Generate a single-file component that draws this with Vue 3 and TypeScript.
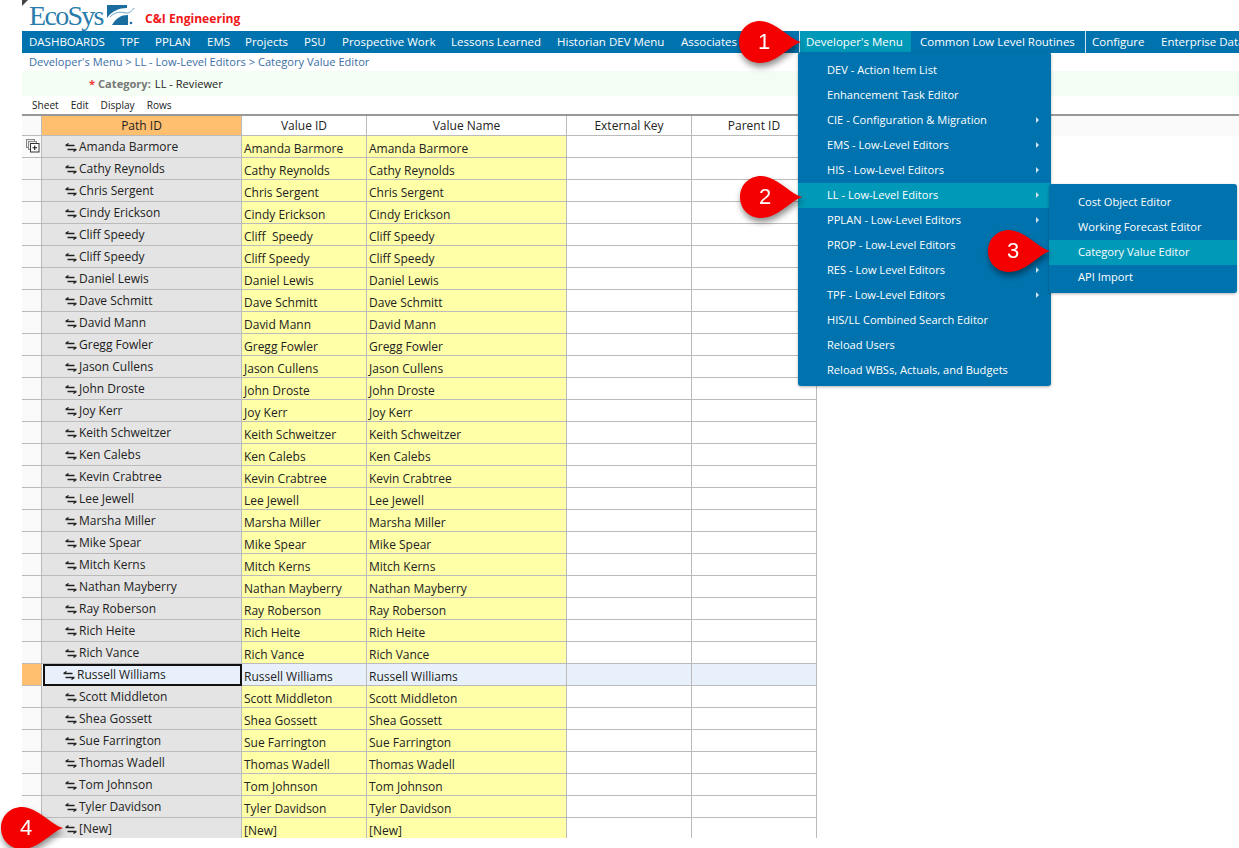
<script setup lang="ts">
const navItems = [
  { label: 'DASHBOARDS', w: 91 },
  { label: 'TPF', w: 35 },
  { label: 'PPLAN', w: 52 },
  { label: 'EMS', w: 38 },
  { label: 'Projects', w: 59 },
  { label: 'PSU', w: 38 },
  { label: 'Prospective Work', w: 109 },
  { label: 'Lessons Learned', w: 106 },
  { label: 'Historian DEV Menu', w: 124 },
  { label: 'Associates', w: 125 },
  { label: "Developer's Menu", w: 112, active: true, sep: true },
  { label: 'Common Low Level Routines', w: 174, wide: true },
  { label: 'Configure', w: 69, sep: true },
  { label: 'Enterprise Data', w: 100 }
]
const menu = [
  { label: 'DEV - Action Item List' },
  { label: 'Enhancement Task Editor' },
  { label: 'CIE - Configuration & Migration', sub: true },
  { label: 'EMS - Low-Level Editors', sub: true },
  { label: 'HIS - Low-Level Editors', sub: true },
  { label: 'LL - Low-Level Editors', sub: true, active: true },
  { label: 'PPLAN - Low-Level Editors', sub: true },
  { label: 'PROP - Low-Level Editors' },
  { label: 'RES - Low Level Editors', sub: true },
  { label: 'TPF - Low-Level Editors', sub: true },
  { label: 'HIS/LL Combined Search Editor' },
  { label: 'Reload Users' },
  { label: 'Reload WBSs, Actuals, and Budgets' }
]
const submenu = [
  { label: 'Cost Object Editor' },
  { label: 'Working Forecast Editor' },
  { label: 'Category Value Editor', active: true },
  { label: 'API Import' }
]
const names = [
  'Amanda Barmore', 'Cathy Reynolds', 'Chris Sergent', 'Cindy Erickson', 'Cliff Speedy', 'Cliff Speedy',
  'Daniel Lewis', 'Dave Schmitt', 'David Mann', 'Gregg Fowler', 'Jason Cullens', 'John Droste', 'Joy Kerr',
  'Keith Schweitzer', 'Ken Calebs', 'Kevin Crabtree', 'Lee Jewell', 'Marsha Miller', 'Mike Spear',
  'Mitch Kerns', 'Nathan Mayberry', 'Ray Roberson', 'Rich Heite', 'Rich Vance', 'Russell Williams',
  'Scott Middleton', 'Shea Gossett', 'Sue Farrington', 'Thomas Wadell', 'Tom Johnson', 'Tyler Davidson', '[New]'
]
const rows = names.map((name, i) => ({
  path: name,
  id: i === 4 ? 'Cliff  Speedy' : name,
  name,
  selected: name === 'Russell Williams'
}))
const callouts = [
  { n: 1, cls: 'c1' },
  { n: 2, cls: 'c2' },
  { n: 3, cls: 'c3' },
  { n: 4, cls: 'c4' }
]
</script>

<template>
  <div class="page">
    <header class="brand">
      <span class="corner"></span>
      <span class="logo-text">EcoSys</span>
      <svg class="logo-mark" width="28" height="21" viewBox="0 0 28 21">
        <path d="M0 0H20V3C12 3 5 6 0 13Z" fill="#1b6d9f" />
        <path d="M5 20C9 13 14 10 21 10V20Z" fill="#1b6d9f" />
        <path d="M3 12C9 6 14 7 19 8C22 8.500 25 6 27 3" fill="none" stroke="#6aa2c2" stroke-width="1" />
        <circle cx="24" cy="18" r="1.300" fill="#1b6d9f" />
      </svg>
      <span class="org">C&amp;I Engineering</span>
    </header>

    <nav class="nav">
      <span
        v-for="item in navItems"
        :key="item.label"
        class="nav-item"
        :class="{ active: item.active, sep: item.sep, wide: item.wide }"
        :style="{ width: item.w + 'px' }"
      >{{ item.label }}</span>
    </nav>

    <div class="crumbs">Developer's Menu &gt; LL - Low-Level Editors &gt; Category Value Editor</div>

    <div class="filter">
      <span class="req">*</span>
      <span class="filter-label">Category:</span>
      <span class="filter-value">LL - Reviewer</span>
    </div>

    <div class="toolbar">
      <span>Sheet</span>
      <span>Edit</span>
      <span>Display</span>
      <span>Rows</span>
    </div>

    <div class="sheet">
      <div class="row head">
        <div class="cell sel"></div>
        <div class="cell path-h">Path ID</div>
        <div class="cell">Value ID</div>
        <div class="cell">Value Name</div>
        <div class="cell">External Key</div>
        <div class="cell">Parent ID</div>
      </div>
      <div v-for="(r, i) in rows" :key="i" class="row" :class="{ selected: r.selected }">
        <div class="cell sel">
          <svg v-if="i === 0" width="14" height="14" viewBox="0 0 14 14" class="expand">
            <rect x="0.500" y="0.500" width="8" height="8" fill="#eee" stroke="#888" />
            <rect x="2.500" y="2.500" width="8" height="8" fill="#eee" stroke="#888" />
            <rect x="4.500" y="4.500" width="8.500" height="8.500" fill="#fff" stroke="#333" />
            <path d="M8.750 6.500V11M6.500 8.750H11" stroke="#111" />
          </svg>
        </div>
        <div class="cell path">
          <svg width="12" height="9" viewBox="0 0 12 9" class="swap">
            <path d="M0.500 2.500H9.500M0.500 2.500L3.500 0.500M11.500 6.500H2.500M11.500 6.500L8.500 8.500" stroke="#222" stroke-width="1.300" fill="none" />
          </svg>
          <span>{{ r.path }}</span>
        </div>
        <div class="cell val">{{ r.id }}</div>
        <div class="cell val">{{ r.name }}</div>
        <div class="cell"></div>
        <div class="cell"></div>
      </div>
    </div>

    <ul class="menu main-menu">
      <li v-for="m in menu" :key="m.label" :class="{ active: m.active }">
        {{ m.label }}
        <i v-if="m.sub" class="arrow"></i>
      </li>
    </ul>
    <ul class="menu sub-menu">
      <li v-for="m in submenu" :key="m.label" :class="{ active: m.active }">{{ m.label }}</li>
    </ul>

    <div v-for="c in callouts" :key="c.n" class="callout" :class="c.cls">
      <svg width="62" height="42" viewBox="0 0 62 42">
        <path d="M62 21C50 18 38 1 21 0C9 0 0 9 0 21C0 33 9 42 21 42C38 42 50 25 62 21Z" fill="#f50000" />
      </svg>
      <span>{{ c.n }}</span>
    </div>
  </div>
</template>

<style scoped>
.page {
  position: relative;
  width: 1239px;
  height: 848px;
  overflow: hidden;
  background: #fff;
  font-family: "Open Sans", "Noto Sans", sans-serif;
  font-size: 11.100px;
  color: #222;
}
.brand {
  position: relative;
  height: 31px;
  padding-left: 29px;
  display: flex;
  align-items: flex-start;
}
.corner {
  position: absolute;
  left: 22px;
  top: 0;
  width: 0;
  height: 0;
  border-top: 6px solid #444;
  border-right: 6px solid transparent;
}
.logo-text {
  font-family: "Liberation Serif", serif;
  font-size: 28px;
  line-height: 32px;
  color: #2a7cab;
  width: 78px;
  letter-spacing: -1.700px;
}
.logo-mark {
  margin-top: 5px;
}
.org {
  margin-left: 10px;
  margin-top: 10px;
  font-weight: 700;
  font-size: 12.100px;
  line-height: 18px;
  color: #f01818;
}
.nav {
  margin-left: 22px;
  height: 22px;
  background: #0073ae;
  display: flex;
  overflow: hidden;
  font-size: 11.500px;
}
.nav-item {
  flex: none;
  box-sizing: border-box;
  padding-left: 7px;
  line-height: 22px;
  color: #fff;
  white-space: nowrap;
}
.nav-item.wide {
  padding-left: 9px;
}
.nav-item.sep {
  border-left: 1px solid #cfe3ee;
  padding-left: 6px;
}
.nav-item.active {
  background: #0099b8;
}
.crumbs {
  margin-left: 29px;
  height: 18px;
  line-height: 17px;
  color: #3a6ea5;
}
.filter {
  margin-left: 22px;
  height: 25px;
  background: #f3fdf3;
  display: flex;
  align-items: center;
  padding-left: 67px;
}
.req {
  color: #f03a3a;
  font-weight: 700;
  margin-right: 3px;
}
.filter-label {
  color: #777;
  font-weight: 700;
  margin-right: 4px;
}
.toolbar {
  height: 18px;
  display: flex;
  align-items: center;
  padding-left: 32px;
  gap: 12px;
  font-size: 10.100px;
  color: #222;
}
.sheet {
  margin-left: 22px;
  height: 724px;
  overflow: hidden;
  border-top: 2px solid #999;
  box-sizing: border-box;
  font-size: 12px;
}
.row {
  display: grid;
  grid-template-columns: 20px 200px 125px 200px 125px 125px;
  height: 22px;
  width: 795px;
}
.row.head {
  height: 20px;
  width: 100%;
  background: #fafafa;
  grid-template-columns: 20px 200px 125px 200px 125px 125px 1fr;
}
.cell {
  box-sizing: border-box;
  border-right: 1px solid #bbb;
  border-bottom: 1px solid #bbb;
  line-height: 21px;
  padding-left: 2px;
  white-space: pre;
  overflow: hidden;
  background: #fff;
}
.head .cell {
  text-align: center;
  padding: 0;
  line-height: 19px;
}
.head .sel {
  background: #fafafa;
}
.head .path-h {
  background: #ffbf6f;
}
.sel {
  background: #fafafa;
}
.path {
  background: #e4e4e4;
  display: flex;
  align-items: center;
  padding-top: 1px;
  padding-left: 23px;
  gap: 2px;
  line-height: 20px;
}
.swap {
  flex: none;
  margin-top: 1px;
}
.val {
  background: #ffffa8;
  line-height: 26px;
}
.expand {
  display: block;
  margin: 3px 0 0 2px;
}
.row.selected .sel {
  background: #ffbf6f;
}
.row.selected .val,
.row.selected .cell:nth-child(n + 5) {
  background: #e8f1fb;
}
.row.selected .path {
  background: #e8f1fb;
  border: 2px solid #111;
  margin-left: 1px;
  padding-top: 0;
  padding-left: 18px;
}
.menu {
  position: absolute;
  margin: 0;
  padding: 6px 0;
  list-style: none;
  background: #0073ae;
  border-radius: 3px;
  box-shadow: 0 1px 3px rgba(0, 0, 0, 0.3);
  box-sizing: border-box;
}
.menu li {
  position: relative;
  height: 25px;
  line-height: 24px;
  color: #fff;
  white-space: nowrap;
}
.menu li.active {
  background: #0099b8;
}
.main-menu {
  left: 798px;
  top: 52px;
  width: 253px;
  height: 334px;
}
.main-menu li {
  padding-left: 29px;
}
.sub-menu {
  left: 1049px;
  top: 184px;
  width: 188px;
  height: 109px;
}
.sub-menu li {
  padding-left: 29px;
}
.arrow {
  position: absolute;
  right: 12px;
  top: 9px;
  width: 0;
  height: 0;
  border-left: 3px solid #cfe3ee;
  border-top: 3px solid transparent;
  border-bottom: 3px solid transparent;
}
.callout {
  position: absolute;
  width: 62px;
  height: 42px;
  filter: drop-shadow(1px 4px 3px rgba(0, 0, 0, 0.45));
}
.callout svg {
  display: block;
}
.callout span {
  position: absolute;
  left: 0;
  top: 0;
  width: 50px;
  text-align: center;
  font-family: "Liberation Sans", sans-serif;
  font-size: 22px;
  line-height: 42px;
  color: #fff;
}
.c1 { left: 739px; top: 21px; }
.c2 { left: 740px; top: 176px; }
.c3 { left: 988px; top: 230px; }
.c4 { left: 1px; top: 807px; }
</style>
